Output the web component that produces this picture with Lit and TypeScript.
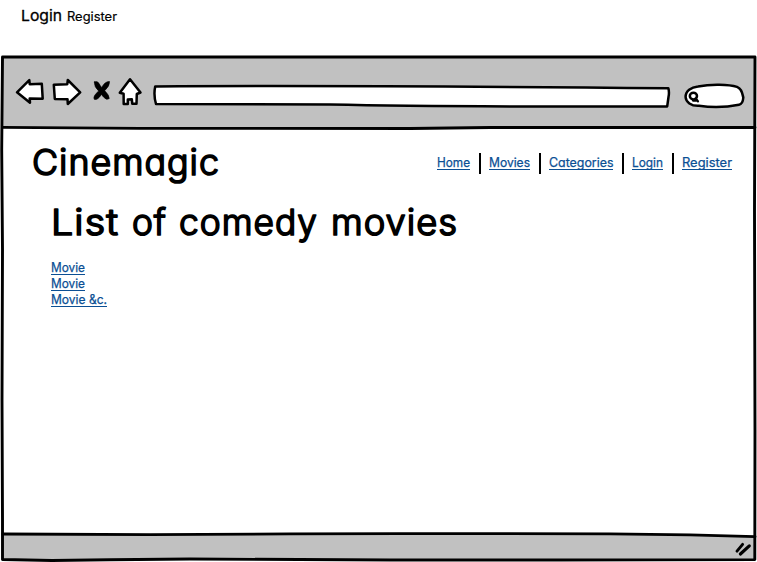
import { LitElement, html, css, svg } from "lit";
import { customElement } from "lit/decorators.js";

/** One line of lettering drawn to a given width. */
@customElement("sketch-text")
class SketchText extends LitElement {
  static properties = {
    text: { type: String },
    width: { type: Number },
    height: { type: Number },
    baseline: { type: Number },
  };
  declare text: string;
  declare width: number;
  declare height: number;
  declare baseline: number;

  static styles = css`
    :host { display: block; flex: none; }
    svg { display: block; overflow: visible; }
    text {
      fill: currentColor;
      stroke: currentColor;
      stroke-width: var(--weight, 0);
      stroke-linejoin: round;
      font-feature-settings: "cv11";
    }
  `;

  render() {
    return html`<svg width=${this.width} height=${this.height}>
      <text x="0" y=${this.baseline} textLength=${this.width} lengthAdjust="spacingAndGlyphs">${this.text}</text>
    </svg>`;
  }
}

interface Item { label: string; width: number; }

const NAV: Item[] = [
  { label: "Home", width: 33 },
  { label: "Movies", width: 41 },
  { label: "Categories", width: 64.5 },
  { label: "Login", width: 31 },
  { label: "Register", width: 50 },
];

const HEADING: Item[] = [
  { label: "List", width: 68 },
  { label: "of", width: 35 },
  { label: "comedy", width: 139 },
  { label: "movies", width: 127 },
];

const MOVIES: Item[] = [
  { label: "Movie", width: 34 },
  { label: "Movie", width: 34 },
  { label: "Movie &c.", width: 56 },
];

@customElement("app-root")
class AppRoot extends LitElement {
  static styles = css`
    :host {
      display: block;
      position: relative;
      width: 757px;
      height: 562px;
      overflow: hidden;
      background: #fff;
      color: #000;
      font-family: Inter, "Open Sans", sans-serif;
    }
    .frame { position: absolute; inset: 0; }
    .page {
      position: relative;
      display: grid;
      grid-template-rows: 56px 72px 406px 28px;
      height: 562px;
    }
    .account { display: flex; gap: 5px; padding: 7px 0 0 21px; }
    .account-login { font-size: 15px; --weight: 0.3px; }
    .account-register { font-size: 12.5px; --weight: 0.2px; }
    .head {
      display: flex;
      justify-content: space-between;
      padding: 16px 25px 0 32px;
    }
    .title { font-size: 36px; font-weight: 300; letter-spacing: 1px; --weight: 1.7px; }
    .heading { display: flex; gap: 12.5px; }
    .nav { display: flex; gap: 8px; padding-top: 9px; }
    .nav-item { display: flex; gap: 9px; }
    .bar { width: 2px; height: 21px; background: #000; }
    .link {
      display: block;
      height: 15px;
      border-bottom: 1px solid #0b4f94;
      color: #0b4f94;
      font-size: 12.5px;
      text-decoration: none;
      --weight: 0.25px;
    }
    .nav .link { margin-top: 1px; }
    .list { padding: 12px 0 0 51px; }
    .links {
      display: flex;
      flex-direction: column;
      align-items: flex-start;
      margin: 7px 0 0 0;
    }
  `;

  private link(item: Item) {
    return html`<a class="link" href="#">
      <sketch-text .text=${item.label} .width=${item.width} .height=${15} .baseline=${13}></sketch-text>
    </a>`;
  }

  private title(item: Item) {
    return html`<sketch-text class="title" .text=${item.label} .width=${item.width} .height=${48} .baseline=${30.5}></sketch-text>`;
  }

  private frame() {
    return svg`<svg class="frame" width="757" height="562" viewBox="0 0 757 562"
        fill="none" stroke="#000" stroke-linecap="round" stroke-linejoin="round">
      <path d="M3 57H755V128L490 127.5L410 128.5L140 128L3 127Z" fill="#c1c1c1" stroke="none"/>
      <path d="M3 534L290 534.5L400 533.5L660 534L755 537V560H3Z" fill="#c1c1c1" stroke="none"/>
      <path d="M2.5 57L400 57L755 57L754.5 210L755 430L754.8 559.6L560 560L390 560L190 559L110 559.8L52 560.5L2.5 559.5L2.5 520L2 400L2.5 250L1.7 150Z" stroke-width="2.9"/>
      <path d="M3 127.3L140 128.3L410 128.5L490 127.5L755 127.5" stroke-width="2.8"/>
      <path d="M3 534L150 534.7L290 533.9L400 533.6L610 533.8L690 534.8L755 536.6" stroke-width="2.8"/>
      <g fill="#fff" stroke-width="2.5">
        <path d="M17 92.3L29.3 80.2L29.7 84.2L41.8 83.8L42.7 98.7L29.7 98.5L30 102.7Z"/>
        <path d="M53.8 84.7L67.3 84.2L67.8 80L80.2 92.3L67.8 104L67.5 99.2L54.8 99Z"/>
        <path d="M130 79.2L140.5 92.5L136.8 94L136.5 103.8L132.3 103.8L131.8 99.2L127.8 99.6L127.8 104L123.7 104L123.6 93.8L119.8 92.8Z"/>
        <path d="M155.2 86.4Q350 85.3 668.3 88.2Q669.5 92 668.5 97L667.2 106.4Q440 107 330 104.6L156 104Q153.4 95 155.2 86.4Z"/>
        <path d="M698 86.4C711 84 729 84.4 737 86.9C742 89 742 93 743.3 97.5C743 102 741.5 104.3 739 104.7C726 107.4 711 107.5 699 105.8C691 106.2 685.8 102 685.6 97C685.5 91 691 87 698 86.4Z"/>
        <ellipse cx="693.4" cy="96.1" rx="3.6" ry="3.3"/>
      </g>
      <path d="M696 98.5L698 101.4M693 100.6H696.5" stroke-width="2.2"/>
      <path d="M94.4 82Q98 80.4 100.2 85.6L101.7 87.6Q105 81.2 109.5 81.6Q109.8 86 104.7 90.7Q109.5 95.5 109.2 98.6Q106.5 100.7 103.5 97L101.4 94.4Q97.6 100.5 94.2 99.2Q92.8 96 98.7 91Q94 86.8 94.4 82Z" fill="#000" stroke-width="0.7"/>
      <path d="M742.6 544.4L737 551.2" stroke-width="2.9"/>
      <path d="M749.3 545.9L740.4 554" stroke-width="3.2"/>
    </svg>`;
  }

  render() {
    return html`
      ${this.frame()}
      <div class="page">
        <div class="account">
          <sketch-text class="account-login" .text=${"Login"} .width=${41} .height=${20} .baseline=${14}></sketch-text>
          <sketch-text class="account-register" .text=${"Register"} .width=${50} .height=${20} .baseline=${14}></sketch-text>
        </div>
        <div class="toolbar"></div>
        <main>
          <header class="head">
            ${this.title({ label: "Cinemagic", width: 188 })}
            <nav class="nav">
              ${NAV.map((item, i) => html`<div class="nav-item">
                ${this.link(item)}
                ${i < NAV.length - 1 ? html`<span class="bar"></span>` : null}
              </div>`)}
            </nav>
          </header>
          <section class="list">
            <div class="heading">${HEADING.map((word) => this.title(word))}</div>
            <div class="links">${MOVIES.map((m) => this.link(m))}</div>
          </section>
        </main>
      </div>
    `;
  }
}
